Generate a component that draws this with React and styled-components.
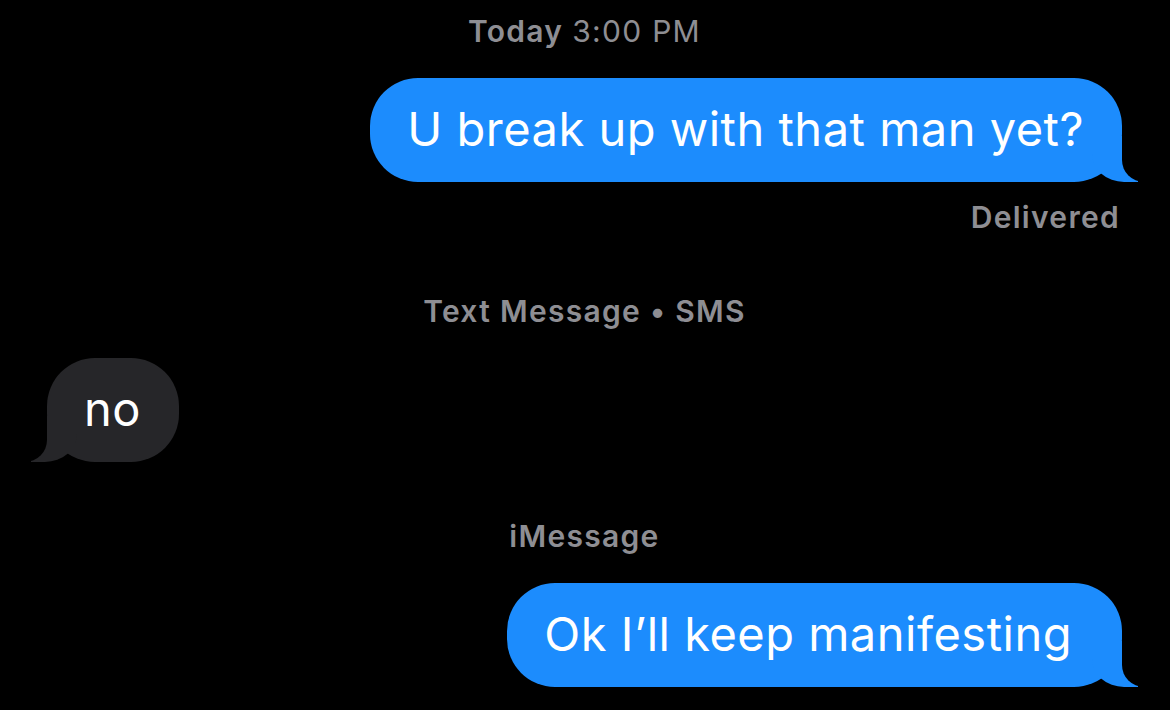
import React from "react";
import styled, { createGlobalStyle } from "styled-components";

const Global = createGlobalStyle`
  html, body { margin: 0; padding: 0; background: #000; }
  body { font-family: Inter, "Noto Sans", sans-serif; -webkit-font-smoothing: antialiased; }
`;

const Page = styled.div`
  width: 1170px;
  height: 710px;
  background: #000;
  display: flex;
  flex-direction: column;
  padding: 0 48px 0 47px;
  box-sizing: border-box;
  overflow: hidden;
`;

const Label = styled.div`
  font-size: 30px;
  line-height: 36px;
  color: #8e8e93;
  font-weight: 600;
  text-align: ${(p) => p.$align || "center"};
  margin-top: ${(p) => p.$mt || 0}px;
  padding-right: ${(p) => p.$pr || 0}px;
  letter-spacing: 1.3px;
`;

const Light = styled.span`
  font-weight: 400;
`;

const Row = styled.div`
  display: flex;
  justify-content: ${(p) => (p.$sent ? "flex-end" : "flex-start")};
  margin-top: ${(p) => p.$mt || 0}px;
`;

const Bubble = styled.div`
  position: relative;
  box-sizing: border-box;
  height: 104px;
  padding: 27px ${(p) => p.$pr || 38}px 29px 37px;
  font-size: 47px;
  line-height: 48px;
  letter-spacing: 0.5px;
  color: #fff;
  border-radius: 48px;
  background: ${(p) => (p.$sent ? "#1c8cfd" : "#262629")};
  white-space: nowrap;

  &::before {
    content: "";
    position: absolute;
    bottom: 0;
    ${(p) => (p.$sent ? "right: -16px;" : "left: -16px;")}
    width: 46px;
    height: 46px;
    background: ${(p) => (p.$sent ? "#1c8cfd" : "#262629")};
    ${(p) =>
      p.$sent
        ? "border-bottom-left-radius: 32px 28px;"
        : "border-bottom-right-radius: 32px 28px;"}
  }

  &::after {
    content: "";
    position: absolute;
    bottom: 0;
    ${(p) => (p.$sent ? "right: -22px;" : "left: -22px;")}
    width: 22px;
    height: 46px;
    background: #000;
    ${(p) =>
      p.$sent
        ? "border-bottom-left-radius: 22px;"
        : "border-bottom-right-radius: 22px;"}
  }
`;

const Text = styled.span`
  position: relative;
  z-index: 1;
`;

export default function App() {
  return (
    <>
      <Global />
      <Page>
        <Label $mt={13}>
          Today <Light>3:00 PM</Light>
        </Label>
        <Row $sent $mt={29}>
          <Bubble $sent>
            <Text>U break up with that man yet?</Text>
          </Bubble>
        </Row>
        <Label $align="right" $pr={2} $mt={17}>
          Delivered
        </Label>
        <Label $mt={58}>Text Message • SMS</Label>
        <Row $mt={29}>
          <Bubble>
            <Text>no</Text>
          </Bubble>
        </Row>
        <Label $mt={56}>iMessage</Label>
        <Row $sent $mt={29}>
          <Bubble $sent $pr={50}>
            <Text>Ok I’ll keep manifesting</Text>
          </Bubble>
        </Row>
      </Page>
    </>
  );
}
